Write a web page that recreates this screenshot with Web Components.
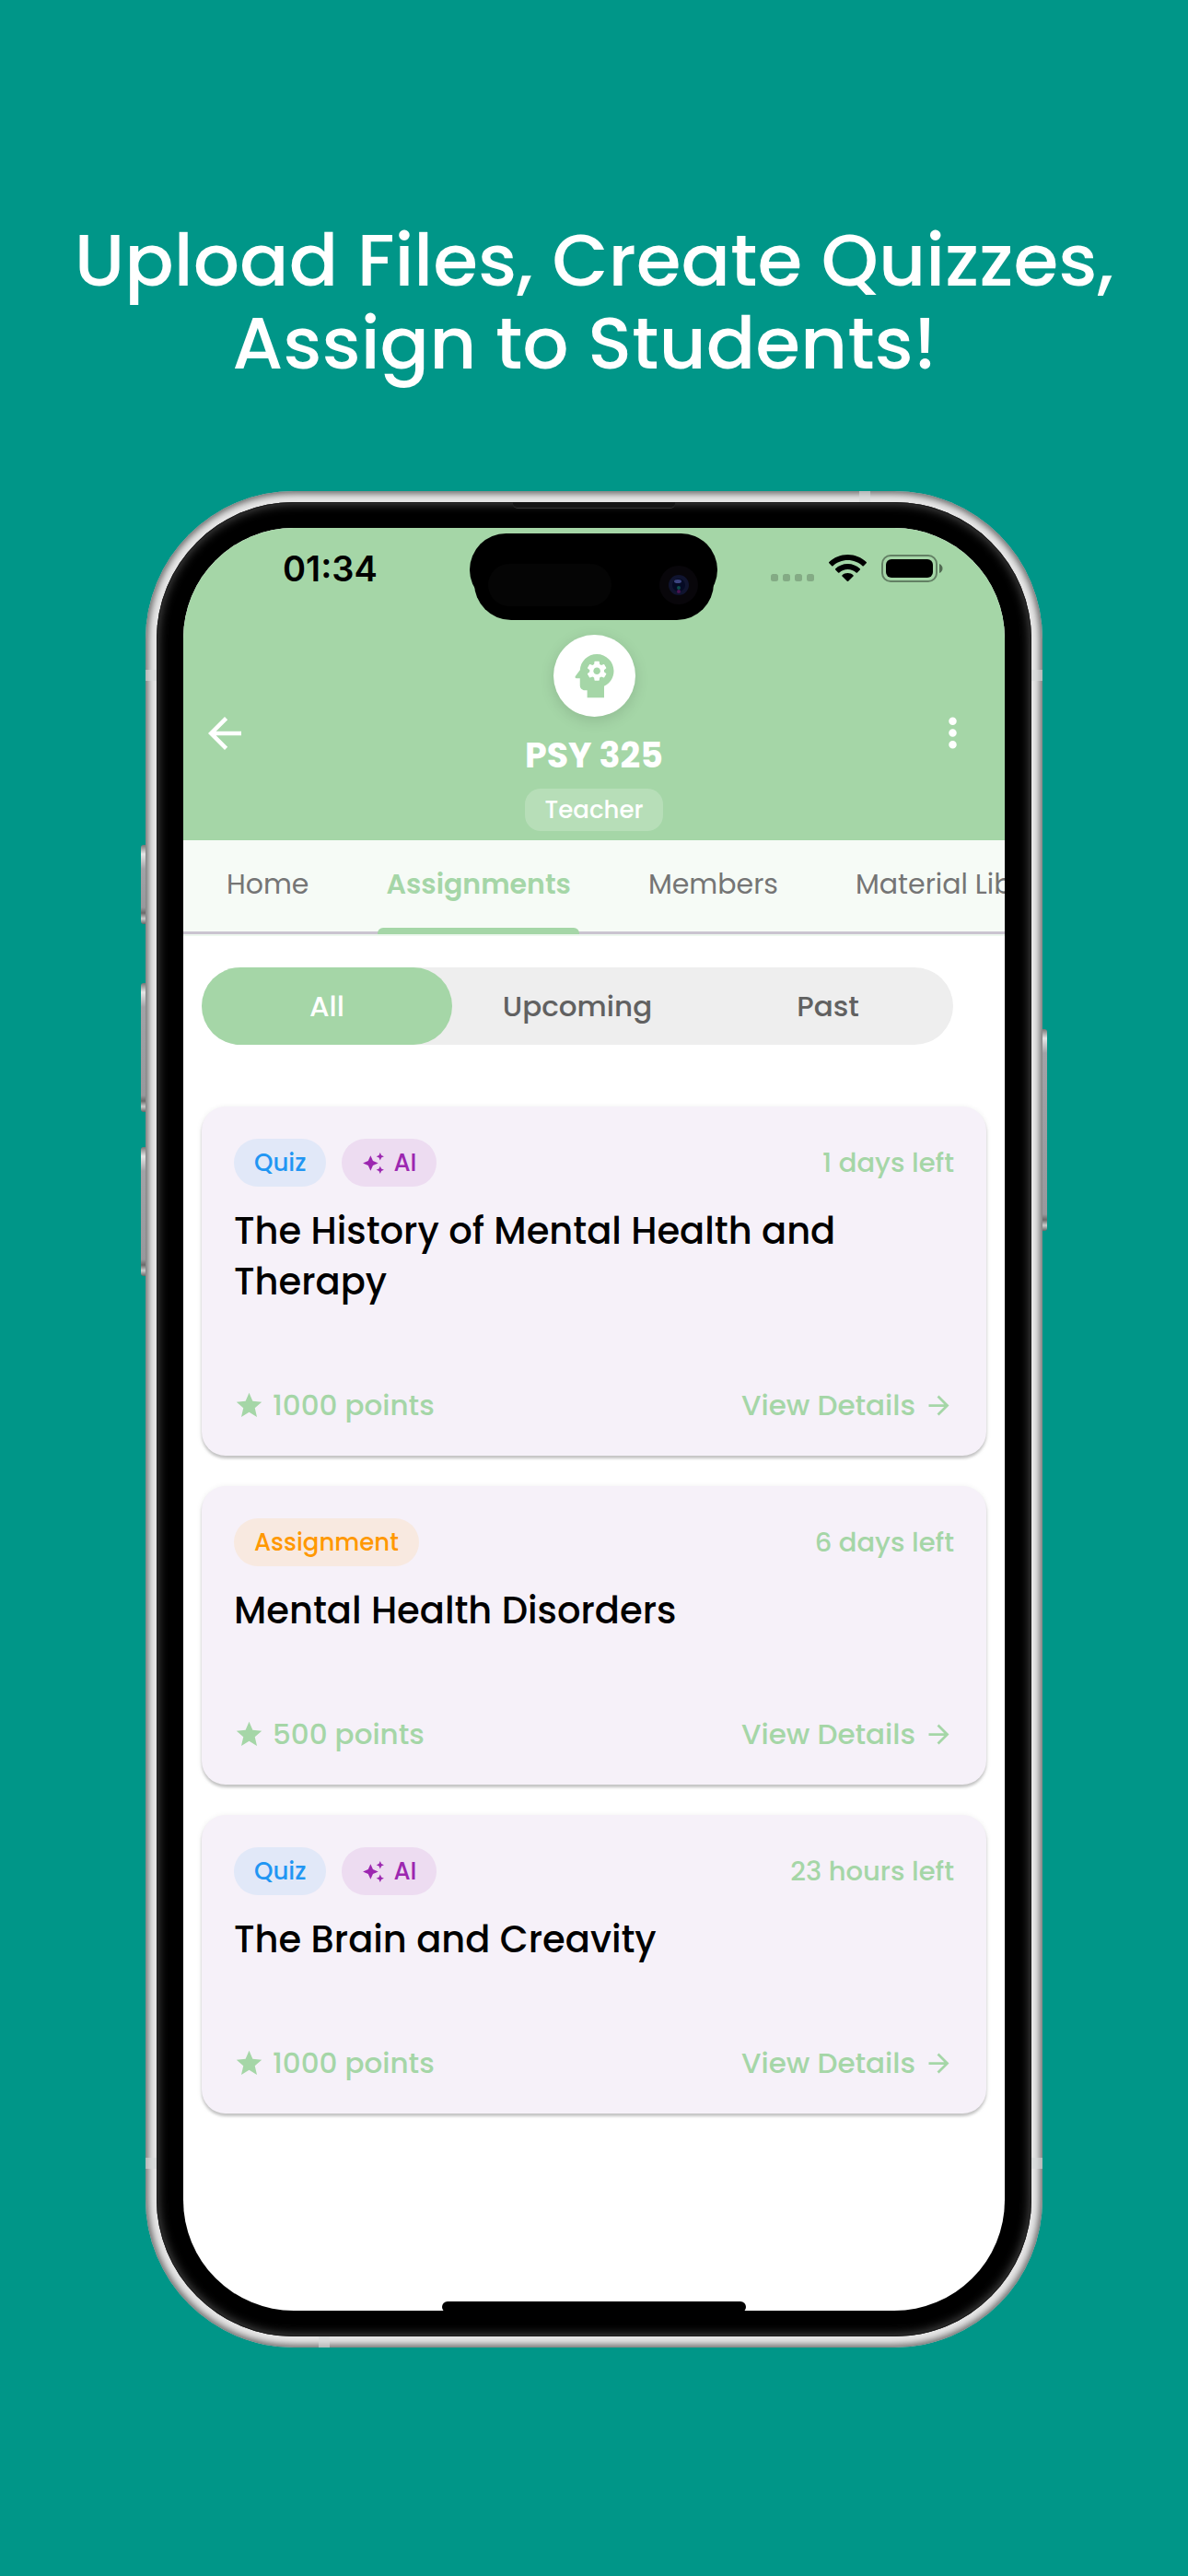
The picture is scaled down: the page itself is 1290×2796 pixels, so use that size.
<!DOCTYPE html>
<html lang="en">
<head>
<meta charset="utf-8">
<meta name="viewport" content="width=device-width, initial-scale=1">
<title>Upload Files, Create Quizzes, Assign to Students!</title>
<style>
  html, body { margin: 0; }
  body {
    min-height: 100vh;
    background: #009688;
    font-family: Poppins, Inter, "Noto Sans", sans-serif;
    color: #000;
  }
</style>
</head>
<body>
<promo-stage>
  <span slot="headline">Upload Files, Create Quizzes,<br>Assign to Students!&nbsp;</span>
  <phone-frame>
    <class-header name="PSY 325" role-name="Teacher"><status-bar slot="status" time="01:34"></status-bar></class-header>
    <tab-strip>
      <tab-item>Home</tab-item>
      <tab-item active>Assignments</tab-item>
      <tab-item>Members</tab-item>
      <tab-item>Material Library</tab-item>
    </tab-strip>
    <assignment-list>
      <segment-control slot="filter">
        <segment-item active>All</segment-item>
        <segment-item>Upcoming</segment-item>
        <segment-item>Past</segment-item>
      </segment-control>
      <assignment-card points="1000" due="1 days left">
        <tag-chip slot="tags" kind="quiz">Quiz</tag-chip>
        <tag-chip slot="tags" kind="ai">AI</tag-chip>
        The History of Mental Health and Therapy
      </assignment-card>
      <assignment-card points="500" due="6 days left">
        <tag-chip slot="tags" kind="assignment">Assignment</tag-chip>
        Mental Health Disorders
      </assignment-card>
      <assignment-card points="1000" due="23 hours left">
        <tag-chip slot="tags" kind="quiz">Quiz</tag-chip>
        <tag-chip slot="tags" kind="ai">AI</tag-chip>
        The Brain and Creavity
      </assignment-card>
    </assignment-list>
  </phone-frame>
</promo-stage>

<script>
  const define = (name, render) => customElements.define(name, class extends HTMLElement {
    constructor() { super(); this.attachShadow({ mode: 'open' }); }
    connectedCallback() {
      this.shadowRoot.innerHTML = '<style>*{box-sizing:border-box}svg{display:block;flex:none;fill:currentColor}button{font:inherit;color:inherit;background:none;border:0;padding:0;margin:0}</style>' + render(this);
    }
  });

  define('promo-stage', () => `
    <style>
      :host { display: flex; flex-direction: column; align-items: center; gap: 115px; padding: 238px 0 248px; }
      h1 { margin: 0; font-size: 79px; line-height: 90px; font-weight: 500; color: #fff; text-align: center; }
    </style>
    <h1><slot name="headline"></slot></h1>
    <slot></slot>`);

  define('phone-frame', () => `
    <style>
      :host { display: block; position: relative; width: 100%; max-width: 974px; }
      .metal { position: relative; padding: 12px; border-radius: 161px; background: #e6e6e6; box-shadow: inset 0 0 7px 3px #6c6c6c; }
      .bezel { position: relative; padding: 28px 29px; border-radius: 149px; background: #000; box-shadow: inset 0 0 0 1px #1c1c1c, inset 0 0 11px 2px #4a4a4a; }
      .screen { position: relative; border-radius: 120px; overflow: hidden; background: #fff; }
      .key { position: absolute; width: 6px; border-radius: 3px 0 0 3px; background: linear-gradient(#777 0, #e6e6e6 10px, #a2a2a6 26px, #98989c calc(100% - 18px), #6a6a6a calc(100% - 12px), #ccc calc(100% - 6px), #666 100%); }
      .left { left: -5px; }
      .right { right: -5px; border-radius: 0 3px 3px 0; }
      .band { position: absolute; background: #d6d8d8; opacity: .6; }
      .side { width: 12px; height: 12px; }
      .speaker { position: absolute; top: 0; left: 50%; width: 176px; height: 7px; margin-left: -88px; background: #151515; border-bottom: 1px solid #333; border-radius: 0 0 5px 5px; }
      .home { position: absolute; bottom: -2px; left: 50%; width: 330px; height: 12px; margin-left: -165px; border-radius: 6px; background: #000; }
    </style>
    <div class="key left" style="top:384px;height:86px"></div>
    <div class="key left" style="top:534px;height:140px"></div>
    <div class="key left" style="top:712px;height:140px"></div>
    <div class="key right" style="top:584px;height:219px"></div>
    <div class="metal">
      <div class="band side" style="left:0;top:194px"></div>
      <div class="band side" style="right:0;top:194px"></div>
      <div class="band side" style="left:0;bottom:194px"></div>
      <div class="band side" style="right:0;bottom:194px"></div>
      <div class="band side" style="right:187px;top:0"></div>
      <div class="band side" style="left:188px;bottom:0"></div>
      <div class="bezel">
        <div class="speaker"></div>
        <div class="screen"><slot></slot><div class="home"></div></div>
      </div>
    </div>`);

  define('status-bar', el => `
    <style>
      :host { display: flex; align-items: center; justify-content: space-between; height: 88px; padding: 0 67px 0 108px; position: relative; color: #000; }
      time { font: 600 38px/46px Inter, sans-serif; }
      .icons { display: flex; align-items: center; gap: 16px; }
      .island { position: absolute; top: 6px; left: 50%; margin-left: -135px; width: 269px; height: 94px; }
    </style>
    <time>${el.getAttribute('time')}</time>
    <svg class="island" viewBox="0 0 269 94" aria-hidden="true">
      <rect width="269" height="79" rx="39.500"/>
      <rect x="5" y="14" width="260" height="80" rx="40"/>
      <rect x="20" y="33" width="134" height="46" rx="23" fill="#050505"/>
      <circle cx="227" cy="56" r="21" fill="#08060a"/>
      <circle cx="227" cy="56" r="11" fill="#10142f"/>
      <circle cx="227" cy="56" r="7" fill="#050a24"/>
      <ellipse cx="226" cy="52" rx="4" ry="2" fill="#3c4480"/>
      <circle cx="227" cy="59" r="2" fill="#0b4a4a"/>
      <circle cx="227" cy="63" r="2" fill="#4a1450"/>
    </svg>
    <div class="icons">
      <svg width="47" height="30" viewBox="0 0 47 30" aria-hidden="true" fill-opacity=".2">
        <rect y="21" width="8" height="8" rx="2.500"/><rect x="13" y="21" width="8" height="8" rx="2.500"/><rect x="26" y="21" width="8" height="8" rx="2.500"/><rect x="39" y="21" width="8" height="8" rx="2.500"/>
      </svg>
      <svg width="41" height="30" viewBox="0 0 41 30" aria-label="Wi-Fi">
        <path d="M20.500 0C12.600 0 5.500 3 .3 8c-.4.4-.4.9 0 1.300l2.900 2.900c.4.400.9.400 1.300 0C8.700 8.300 14.300 6 20.500 6s11.800 2.300 16 6.200c.4.400.9.400 1.300 0l2.900-2.900c.4-.4.4-.9 0-1.300C35.500 3 28.400 0 20.500 0z"/>
        <path d="M20.500 10c-5.200 0-9.900 2-13.300 5.300-.4.400-.4.900 0 1.300l2.900 2.900c.4.400.9.400 1.300 0 2.400-2.200 5.600-3.600 9.100-3.600s6.700 1.400 9.100 3.600c.4.400.9.400 1.300 0l2.900-2.900c.4-.4.4-.9 0-1.300C30.400 12 25.700 10 20.500 10z"/>
        <path d="M20.500 20c-2.400 0-4.500.9-6 2.300-.4.400-.4.900 0 1.300l5.300 5.200c.4.400 1 .4 1.400 0l5.300-5.200c.4-.4.400-.9 0-1.300-1.500-1.400-3.600-2.300-6-2.300z"/>
      </svg>
      <svg width="67" height="30" viewBox="0 0 67 30" aria-label="Battery full">
        <rect x="1" y="1" width="59" height="28" rx="9" fill="none" stroke="#000" stroke-opacity=".4" stroke-width="2"/>
        <rect x="5" y="5" width="51" height="20" rx="6"/>
        <path d="M63 10c2 .8 3.500 2.600 3.500 5s-1.500 4.200-3.500 5z" fill-opacity=".5"/>
      </svg>
    </div>`);

  define('class-header', el => `
    <style>
      :host { display: block; background: #a5d6a7; color: #fff; }
      .row { display: flex; align-items: center; justify-content: space-between; padding: 28px 0 10px; }
      .side { flex: 1 1 0; display: flex; padding: 0 31px 0 18px; }
      .mid { display: flex; flex-direction: column; align-items: center; }
      .avatar { display: flex; align-items: center; justify-content: center; width: 89px; height: 89px; border-radius: 50%; background: #fff; color: #a5d6a7; box-shadow: 0 4px 16px rgba(0,0,0,.13); }
      h2 { margin: 14px 0 8px; font-size: 38px; line-height: 56px; font-weight: 700; }
      .badge { padding: 0 22px; border-radius: 17px; background: rgba(255,255,255,.2); font-size: 26px; line-height: 46px; font-weight: 500; }
      .end { justify-content: flex-end; }
    </style>
    <slot name="status"></slot>
    <div class="row">
      <div class="side"><button aria-label="Back"><svg width="54" height="54" viewBox="0 0 24 24"><path d="M20 11H7.830l5.590-5.590L12 4l-8 8 8 8 1.410-1.410L7.830 13H20v-2z"/></svg></button></div>
      <div class="mid">
        <div class="avatar"><svg width="63" height="63" viewBox="0 0 24 24" aria-hidden="true"><path d="M13 8.570c-.79 0-1.430.64-1.430 1.430s.64 1.430 1.430 1.430 1.430-.64 1.430-1.430-.64-1.430-1.430-1.430z"/><path d="M13 3C9.250 3 6.200 5.940 6.020 9.640L4.100 12.200c-.25.33-.01.8.4.8H6v3c0 1.100.9 2 2 2h1v3h7v-4.680c2.360-1.120 4-3.530 4-6.320 0-3.870-3.130-7-7-7zm3 7c0 .13-.01.26-.02.39l.83.66c.08.06.1.16.05.25l-.8 1.390c-.05.09-.16.12-.24.09l-.99-.4c-.21.16-.43.29-.67.39L14 13.830c-.01.1-.1.17-.2.17h-1.600c-.1 0-.18-.07-.2-.17l-.15-1.060c-.25-.1-.47-.23-.68-.39l-.99.4c-.09.03-.2 0-.25-.09l-.8-1.390c-.05-.08-.03-.19.05-.25l.84-.66c-.01-.13-.02-.26-.02-.39s.02-.27.04-.39l-.85-.66c-.08-.06-.1-.16-.05-.26l.8-1.380c.05-.09.15-.12.24-.09l1 .4c.2-.15.43-.29.67-.39L12 6.170c.02-.1.1-.17.2-.17h1.600c.1 0 .18.07.2.17l.15 1.060c.24.1.46.23.67.39l1-.4c.09-.03.2 0 .24.09l.8 1.380c.05.09.03.2-.05.26l-.85.66c.03.12.04.25.04.39z"/></svg></div>
        <h2>${el.getAttribute('name')}</h2>
        <div class="badge">${el.getAttribute('role-name')}</div>
      </div>
      <div class="side end"><button aria-label="More options"><svg width="51" height="51" viewBox="0 0 24 24"><path d="M12 8c1.100 0 2-.9 2-2s-.9-2-2-2-2 .9-2 2 .9 2 2 2zm0 2c-1.100 0-2 .9-2 2s.9 2 2 2 2-.9 2-2-.9-2-2-2zm0 6c-1.100 0-2 .9-2 2s.9 2 2 2 2-.9 2-2-.9-2-2-2z"/></svg></button></div>
    </div>`);

  define('tab-strip', () => `
    <style>
      :host { display: block; background: #f6fbf6; border-bottom: 2px solid #edf7ee; }
      nav { display: flex; overflow: hidden; padding-left: 5px; box-shadow: inset 0 -3px #cac4d0; }
    </style>
    <nav><slot></slot></nav>`);

  define('tab-item', el => `
    <style>
      :host { display: block; flex: none; position: relative; color: #757575; }
      :host([active]) { color: #a5d6a7; font-weight: 600; }
      button { display: block; padding: 0 42px; font-size: 30px; line-height: 96px; border-bottom: 6px solid transparent; white-space: nowrap; }
      :host([active])::after { content: ""; position: absolute; left: 33px; right: 33px; bottom: 0; height: 7px; border-radius: 6px 6px 0 0; background: #a5d6a7; }
    </style>
    <button ${el.hasAttribute('active') ? 'aria-current="page"' : ''}><slot></slot></button>`);

  define('segment-control', () => `
    <style>:host { display: flex; margin-right: 36px; border-radius: 42px; background: #eee; }</style>
    <slot></slot>`);

  define('segment-item', el => `
    <style>
      :host { display: block; flex: 1; color: #616161; }
      button { display: block; width: 100%; border-radius: 42px; font-size: 31px; line-height: 84px; font-weight: 500; text-align: center; }
      :host([active]) button { background: #a5d6a7; color: #fff; }
    </style>
    <button aria-pressed="${el.hasAttribute('active')}"><slot></slot></button>`);

  define('assignment-list', () => `
    <style>
      :host { display: block; padding: 34px 20px 214px; }
      .cards { display: flex; flex-direction: column; gap: 33px; margin-top: 67px; }
    </style>
    <slot name="filter"></slot>
    <div class="cards"><slot></slot></div>`);

  const sparkle = '<svg width="25" height="25" viewBox="0 0 24 24" aria-hidden="true"><path d="M19 9l1.250-2.750L23 5l-2.750-1.250L19 1l-1.250 2.750L15 5l2.750 1.250L19 9zm-7.500.5L9 4 6.500 9.500 1 12l5.500 2.500L9 20l2.500-5.500L17 12l-5.500-2.500zM19 15l-1.250 2.750L15 19l2.750 1.250L19 23l1.250-2.750L23 19l-2.750-1.250L19 15z"/></svg>';

  define('tag-chip', el => `
    <style>
      :host { display: flex; align-items: center; gap: 9px; padding: 0 22px; border-radius: 26px; font-size: 26px; line-height: 52px; font-weight: 500; }
      :host([kind="quiz"]) { color: #2196f3; background: #e1e8f8; }
      :host([kind="ai"]) { color: #9c27b0; background: #eddcf1; }
      :host([kind="assignment"]) { color: #ff9800; background: #f8e9e0; }
    </style>
    ${el.getAttribute('kind') === 'ai' ? sparkle : ''}<slot></slot>`);

  define('assignment-card', el => `
    <style>
      :host { display: block; padding: 35px 35px 33px; border-radius: 26px; background: #f6f1f9; box-shadow: 0 3px 3px rgba(0,0,0,.2), 0 1px 6px rgba(0,0,0,.08); }
      .row, .tags, .points, a { display: flex; align-items: center; }
      .row { justify-content: space-between; color: #a5d6a7; }
      .tags { gap: 17px; }
      .due { font-size: 29px; line-height: 52px; font-weight: 500; }
      h3 { margin: 21px 0 85px; font-size: 40px; line-height: 55px; font-weight: 500; }
      .points, a { gap: 9px; font-size: 31px; line-height: 43px; font-weight: 500; color: inherit; text-decoration: none; }
    </style>
    <div class="row"><div class="tags"><slot name="tags"></slot></div><span class="due">${el.getAttribute('due')}</span></div>
    <h3><slot></slot></h3>
    <div class="row">
      <span class="points"><svg width="33" height="33" viewBox="0 0 24 24" aria-hidden="true"><path d="M12 17.270L18.180 21l-1.640-7.030L22 9.240l-7.190-.61L12 2 9.190 8.630 2 9.240l5.460 4.730L5.820 21z"/></svg><span>${el.getAttribute('points')} points</span></span>
      <a href="#"><span>View Details</span><svg width="33" height="33" viewBox="0 0 24 24" aria-hidden="true"><path d="M12 4l-1.410 1.410L16.170 11H4v2h12.170l-5.580 5.590L12 20l8-8z"/></svg></a>
    </div>`);
</script>
</body>
</html>
